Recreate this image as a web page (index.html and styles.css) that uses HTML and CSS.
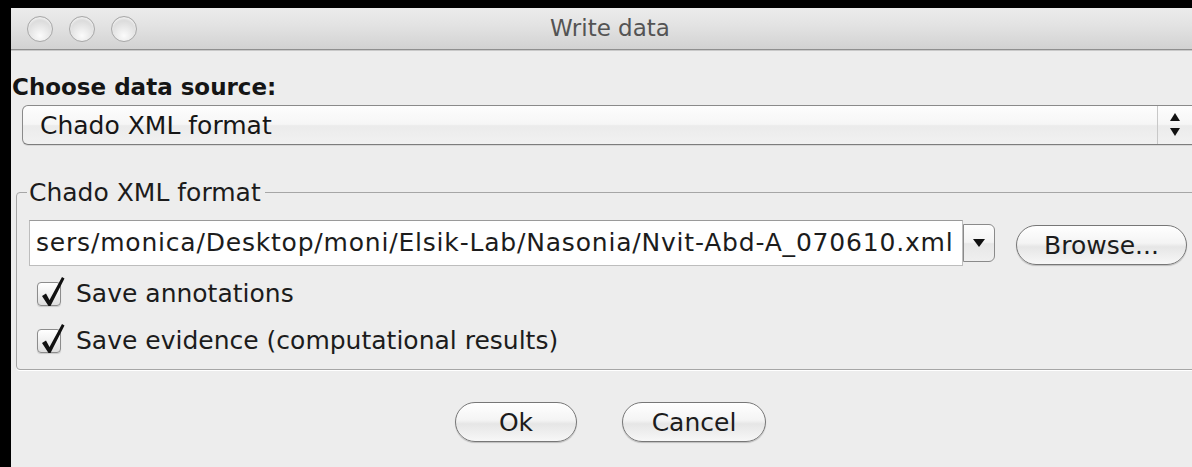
FILE: index.html
```html
<!DOCTYPE html>
<html lang="en">
<head>
<meta charset="utf-8">
<title>Write data</title>
<link rel="stylesheet" href="styles.css">
</head>
<body>
<div class="window">
  <div class="titlebar">
    <div class="lights">
      <span class="light"></span>
      <span class="light"></span>
      <span class="light"></span>
    </div>
    <div class="title">Write data</div>
    <div class="spacer"></div>
  </div>

  <div class="content">
    <div class="heading">Choose data source:</div>
    <div class="popup">
      <span class="popup-text">Chado XML format</span>
      <span class="stepper">
        <svg width="12" height="26" viewBox="0 0 12 26">
          <path d="M6 1 L11 9 L1 9 Z" fill="#111"/>
          <path d="M1 16 L11 16 L6 24 Z" fill="#111"/>
        </svg>
      </span>
    </div>

    <fieldset class="group">
      <legend>Chado XML format</legend>
      <div class="file-row">
        <div class="combo">
          <div class="field">sers/monica/Desktop/moni/Elsik-Lab/Nasonia/Nvit-Abd-A_070610.xml</div>
          <div class="arrow-btn">
            <svg width="12" height="8" viewBox="0 0 12 8"><path d="M0 0 L12 0 L6 8 Z" fill="#111"/></svg>
          </div>
        </div>
        <button class="pill browse">Browse...</button>
      </div>
      <label class="check">
        <span class="box">
          <svg class="tick" width="28" height="34" viewBox="0 0 28 34"><path d="M4 20 L8 17.5 L11.5 24 L24 1 L26.5 2.5 L12.5 30 L10.5 30 Z" fill="#111"/></svg>
        </span>
        <span>Save annotations</span>
      </label>
      <label class="check">
        <span class="box">
          <svg class="tick" width="28" height="34" viewBox="0 0 28 34"><path d="M4 20 L8 17.5 L11.5 24 L24 1 L26.5 2.5 L12.5 30 L10.5 30 Z" fill="#111"/></svg>
        </span>
        <span>Save evidence (computational results)</span>
      </label>
    </fieldset>

    <div class="actions">
      <button class="pill ok">Ok</button>
      <button class="pill cancel">Cancel</button>
    </div>
  </div>
</div>
</body>
</html>
```

FILE: styles.css
```css
html, body {
  margin: 0;
  height: 100%;
}

body {
  background: #000;
  overflow: hidden;
  font-family: "DejaVu Sans", "Liberation Sans", sans-serif;
  color: #1c1c1c;
}

.window {
  margin: 8px 0 0 11px;
  width: 1198px;
  height: 459px;
  background: #ededed;
}

/* title bar */
.titlebar {
  height: 41px;
  border-bottom: 1px solid #8f8f8f;
  box-shadow: 0 1px 0 #c9c9c9;
  background: linear-gradient(#ececec, #e2e2e2 45%, #d2d2d2);
  display: grid;
  grid-template-columns: 1fr auto 1fr;
  align-items: center;
}

.lights {
  display: flex;
  gap: 16px;
  padding-left: 16px;
}

.light {
  width: 26px;
  height: 26px;
  box-sizing: border-box;
  border-radius: 50%;
  border: 1px solid #a8a8a8;
  background: radial-gradient(circle at 50% 78%, #fbfbfb 0%, #e6e6e6 45%, #cdcdcd 100%);
  box-shadow: inset 0 2px 2px rgba(255, 255, 255, 0.6);
}

.title {
  font-size: 23px;
  color: #545454;
  padding-bottom: 1px;
}

/* dialog body */
.content {
  padding: 24px 0 0 1px;
}

.heading {
  font-size: 23px;
  font-weight: bold;
  line-height: 27px;
  color: #151515;
}

.popup {
  display: flex;
  align-items: stretch;
  height: 40px;
  box-sizing: border-box;
  margin: 4px 12px 0 10px;
  border: 1px solid #8a8a8a;
  border-bottom-color: #7d7d7d;
  border-radius: 6px 0 0 6px;
  background: linear-gradient(#fdfdfd, #f6f6f6 48%, #ebebeb 52%, #f1f1f1);
  box-shadow: 0 1px 0 #d8d8d8;
}

.popup-text {
  flex: 1;
  display: flex;
  align-items: center;
  padding-left: 17px;
  font-size: 25px;
  color: #161616;
}

.stepper {
  width: 34px;
  border-left: 1px solid #c8c8c8;
  display: flex;
  align-items: center;
  justify-content: center;
  padding-right: 4px;
}

/* group box */
.group {
  margin: 34px 5px 0 4px;
  padding: 0 0 5px 10px;
  min-width: 0;
  border: 1px solid #a6a6a6;
  border-radius: 4px;
  box-shadow: 0 1px 0 #fff;
}

.group legend {
  padding: 0 4px 0 2px;
  font-size: 25px;
  line-height: 27px;
  color: #1c1c1c;
}

.file-row {
  display: flex;
  align-items: center;
  margin: 14px 0 0 2px;
}

.combo {
  display: flex;
  align-items: flex-start;
}

.field {
  width: 934px;
  height: 46px;
  box-sizing: border-box;
  padding-left: 6px;
  background: #fff;
  border: 1px solid #bdbdbd;
  border-top-color: #9a9a9a;
  font-size: 25px;
  letter-spacing: 0.8px;
  line-height: 43px;
  white-space: nowrap;
  overflow: hidden;
  color: #1c1c1c;
}

.arrow-btn {
  width: 32px;
  height: 38px;
  margin-top: 4px;
  box-sizing: border-box;
  border: 1px solid #8a8a8a;
  border-radius: 0 6px 6px 0;
  background: linear-gradient(#fdfdfd, #f3f3f3 48%, #e7e7e7 52%, #efefef);
  display: flex;
  align-items: center;
  justify-content: center;
}

.pill {
  font-family: inherit;
  font-size: 25px;
  color: #1c1c1c;
  height: 40px;
  box-sizing: border-box;
  border: 1px solid #777;
  border-radius: 20px;
  background: linear-gradient(#ffffff, #f4f4f4 45%, #e6e6e6 55%, #f7f7f7);
  box-shadow: 0 1px 1px rgba(0, 0, 0, 0.2);
  padding: 0;
}

.browse {
  width: 171px;
  margin-left: 21px;
  margin-top: 4px;
}

/* check boxes */
.check {
  display: flex;
  align-items: center;
  height: 47px;
  margin-left: 10px;
  font-size: 25px;
  color: #1c1c1c;
}

.file-row + .check {
  margin-top: 4px;
}

.box {
  position: relative;
  width: 24px;
  height: 24px;
  box-sizing: border-box;
  margin-right: 15px;
  border: 1px solid #8c8c8c;
  border-radius: 4px;
  background: linear-gradient(#ffffff, #f0f0f0 50%, #dedede);
  box-shadow: 0 1px 1px rgba(0, 0, 0, 0.15);
}

.tick {
  position: absolute;
  left: 0;
  top: -7px;
}

/* dialog buttons */
.actions {
  display: flex;
  justify-content: center;
  gap: 45px;
  margin-top: 32px;
}

.ok {
  width: 122px;
}

.cancel {
  width: 144px;
}
```
